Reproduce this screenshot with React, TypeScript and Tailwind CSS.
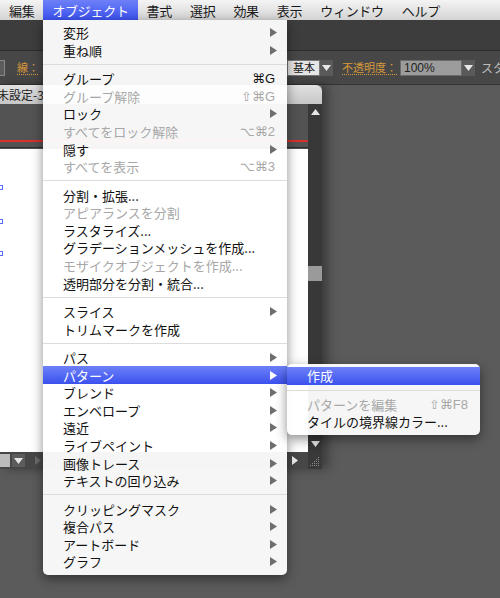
import React from "react";

type Item = { label: string; sc?: string; arrow?: boolean; off?: boolean; active?: boolean };

const GROUPS: Item[][] = [
  [
    { label: "変形", arrow: true },
    { label: "重ね順", arrow: true },
  ],
  [
    { label: "グループ", sc: "⌘G" },
    { label: "グループ解除", sc: "⇧⌘G", off: true },
    { label: "ロック", arrow: true },
    { label: "すべてをロック解除", sc: "⌥⌘2", off: true },
    { label: "隠す", arrow: true },
    { label: "すべてを表示", sc: "⌥⌘3", off: true },
  ],
  [
    { label: "分割・拡張..." },
    { label: "アピアランスを分割", off: true },
    { label: "ラスタライズ..." },
    { label: "グラデーションメッシュを作成..." },
    { label: "モザイクオブジェクトを作成...", off: true },
    { label: "透明部分を分割・統合..." },
  ],
  [
    { label: "スライス", arrow: true },
    { label: "トリムマークを作成" },
  ],
  [
    { label: "パス", arrow: true },
    { label: "パターン", arrow: true, active: true },
    { label: "ブレンド", arrow: true },
    { label: "エンベロープ", arrow: true },
    { label: "遠近", arrow: true },
    { label: "ライブペイント", arrow: true },
    { label: "画像トレース", arrow: true },
    { label: "テキストの回り込み", arrow: true },
  ],
  [
    { label: "クリッピングマスク", arrow: true },
    { label: "複合パス", arrow: true },
    { label: "アートボード", arrow: true },
    { label: "グラフ", arrow: true },
  ],
];

const SUB: Item[][] = [
  [{ label: "作成", active: true }],
  [
    { label: "パターンを編集", sc: "⇧⌘F8", off: true },
    { label: "タイルの境界線カラー..." },
  ],
];

const MENUBAR = ["編集", "オブジェクト", "書式", "選択", "効果", "表示", "ウィンドウ", "ヘルプ"];

function Arrow({ white }: { white?: boolean }) {
  return (
    <svg width="7" height="9" viewBox="0 0 7 9" className="shrink-0">
      <polygon points="0,0 7,4.5 0,9" fill={white ? "#ffffff" : "#6e6e6e"} />
    </svg>
  );
}

function Tri({ dir, color }: { dir: "up" | "down" | "right"; color: string }) {
  const pts = dir === "up" ? "0,6 4.5,0 9,6" : dir === "down" ? "0,0 9,0 4.5,6" : "0,0 6,4.5 0,9";
  const w = dir === "right" ? 6 : 9;
  const h = dir === "right" ? 9 : 6;
  return (
    <svg width={w} height={h} viewBox={`0 0 ${w} ${h}`}>
      <polygon points={pts} fill={color} />
    </svg>
  );
}

function Row({ item }: { item: Item }) {
  const tone = item.active
    ? "bg-linear-to-b from-[#6e80f8] to-[#3b50ee] text-white"
    : item.off
    ? "text-[#a7a7a7]"
    : "text-[#111]";
  return (
    <div className={`flex h-[17.6px] items-center justify-between pl-[20px] pr-[10px] ${tone}`}>
      <span className="whitespace-nowrap leading-none">{item.label}</span>
      {item.arrow && <Arrow white={item.active} />}
      {item.sc && (
        <span
          className={`mr-[2px] whitespace-nowrap font-['Liberation_Sans','DejaVu_Sans',sans-serif] text-[13px] leading-none ${
            item.off ? "text-[#a7a7a7]" : "text-[#111]"
          }`}
        >
          {item.sc}
        </span>
      )}
    </div>
  );
}

function Menu({ groups }: { groups: Item[][] }) {
  return (
    <>
      {groups.map((g, i) => (
        <div key={i}>
          {i > 0 && (
            <div className="flex h-[10.8px] items-center">
              <div className="h-px w-full bg-[#dcdcdc]" />
            </div>
          )}
          {g.map((it) => (
            <Row key={it.label} item={it} />
          ))}
        </div>
      ))}
    </>
  );
}

export default function App() {
  return (
    <div className="relative h-[598px] w-[500px] overflow-hidden bg-[#5b5b5b] font-['Noto_Sans_CJK_JP','DejaVu_Sans',sans-serif] text-[13px]">
      {/* menubar */}
      <div className="flex h-[20px] items-stretch bg-linear-to-b from-[#f4f4f4] to-[#d4d4d4] text-[13px] tracking-[-0.3px] text-[#1a1a1a]">
        {MENUBAR.map((m, i) => (
          <div
            key={m}
            className={`flex items-center px-[9px] leading-none ${
              i === 1 ? "bg-linear-to-b from-[#6e80f8] to-[#3b50ee] text-white" : ""
            }`}
          >
            {m}
          </div>
        ))}
      </div>

      {/* app toolbars */}
      <div className="h-[31px] border-b border-[#2c2c2c] bg-[#3d3d3d]" />
      <div className="flex h-[34px] items-center whitespace-nowrap border-b border-[#333] bg-[#474747] text-[11px] leading-none">
        <div className="ml-[-2px] h-[16px] w-[7px] shrink-0 border border-[#888] bg-[#5c5c5c]" />
        <span className="ml-[12px] shrink-0 text-[#d7993a] underline decoration-dotted underline-offset-2">線：</span>
        <div className="ml-[248px] flex h-[16px] shrink-0 items-stretch">
          <div className="flex w-[33px] items-center border border-[#777] bg-[#e6e6e6] pl-[5px] text-[#222]">基本</div>
          <div className="flex w-[13px] items-center justify-center bg-[#5a5a5a]">
            <Tri dir="down" color="#e8e8e8" />
          </div>
        </div>
        <span className="ml-[9px] shrink-0 text-[#d7993a] underline decoration-dotted underline-offset-2">不透明度：</span>
        <div className="ml-[3px] flex h-[16px] shrink-0 items-stretch">
          <div className="flex w-[62px] items-center border border-[#6a6a6a] bg-[#9c9c9c] pl-[3px] font-['Liberation_Sans',sans-serif] text-[12px] text-[#222]">
            100%
          </div>
          <div className="flex w-[13px] items-center justify-center bg-[#5a5a5a]">
            <Tri dir="down" color="#e8e8e8" />
          </div>
        </div>
        <span className="ml-[6px] shrink-0 text-[12px] text-[#bdbdbd]">スタ</span>
      </div>

      {/* document area */}
      <div className="flex">
        <div className="flex h-[384px] w-[322px] flex-col shadow-[6px_0_10px_rgba(0,0,0,0.35)]">
          <div className="flex h-[19px] items-center rounded-tr-[6px] bg-linear-to-b from-[#e2e2e2] to-[#c6c6c6] text-[12px] leading-none text-[#222]">
            <span className="ml-[-3px] whitespace-nowrap">未設定-3</span>
          </div>
          <div className="flex h-[348px]">
            <div className="flex flex-1 flex-col">
              <div className="h-[45px] bg-[#535353] pt-[36px]">
                <div className="h-[2px] bg-[#d8302c]" />
                <div className="mt-[5px] h-px bg-[#2e2e2e]" />
              </div>
              <div className="relative flex-1 bg-white">
                <div className="absolute left-[-2px] top-[36px] h-[5px] w-[5px] border border-[#5a6cff]" />
                <div className="absolute left-[-2px] top-[70px] h-[5px] w-[5px] border border-[#5a6cff]" />
                <div className="absolute left-[-2px] top-[102px] h-[5px] w-[5px] border border-[#5a6cff]" />
              </div>
            </div>
            <div className="flex w-[14px] flex-col bg-[#383838]">
              <div className="flex h-[16px] items-center justify-center">
                <Tri dir="up" color="#e6e6e6" />
              </div>
              <div className="h-[146px]" />
              <div className="h-[15px] bg-[#9a9a9a]" />
              <div className="flex-1" />
              <div className="flex h-[16px] items-center justify-center">
                <Tri dir="down" color="#e6e6e6" />
              </div>
            </div>
          </div>
          <div className="flex h-[17px] items-center bg-[#474747]">
            <div className="h-[13px] w-[10px] bg-[#bcbcbc]" />
            <div className="ml-[2px] flex h-[13px] w-[13px] items-center justify-center bg-[#5c5c5c]">
              <Tri dir="down" color="#e6e6e6" />
            </div>
            <div className="ml-[10px]">
              <Tri dir="right" color="#6a6a6a" />
            </div>
            <div className="flex-1" />
            <div className="mr-[10px]">
              <Tri dir="right" color="#f0f0f0" />
            </div>
            <div className="flex h-[17px] w-[14px] items-end justify-end bg-[#3a3a3a] p-[2px]">
              <svg width="10" height="10" viewBox="0 0 10 10">
                {[0, 1, 2, 3, 4].map((r) =>
                  [0, 1, 2, 3, 4]
                    .filter((c) => c + r >= 4)
                    .map((c) => <rect key={`${r}-${c}`} x={c * 2} y={r * 2} width="1" height="1" fill="#8a8a8a" />)
                )}
              </svg>
            </div>
          </div>
        </div>
        <div className="flex-1" />
      </div>

      {/* object menu */}
      <div className="absolute left-[43px] top-[20px] w-[244px] rounded-b-[5px] bg-white/95 py-[4px] shadow-[0_4px_12px_rgba(0,0,0,0.45)]">
        <Menu groups={GROUPS} />
      </div>

      {/* pattern submenu */}
      <div className="absolute left-[287px] top-[364px] w-[193px] rounded-[5px] bg-white/95 pb-[4px] pt-[3.2px] shadow-[0_4px_12px_rgba(0,0,0,0.45)]">
        <Menu groups={SUB} />
      </div>
    </div>
  );
}
